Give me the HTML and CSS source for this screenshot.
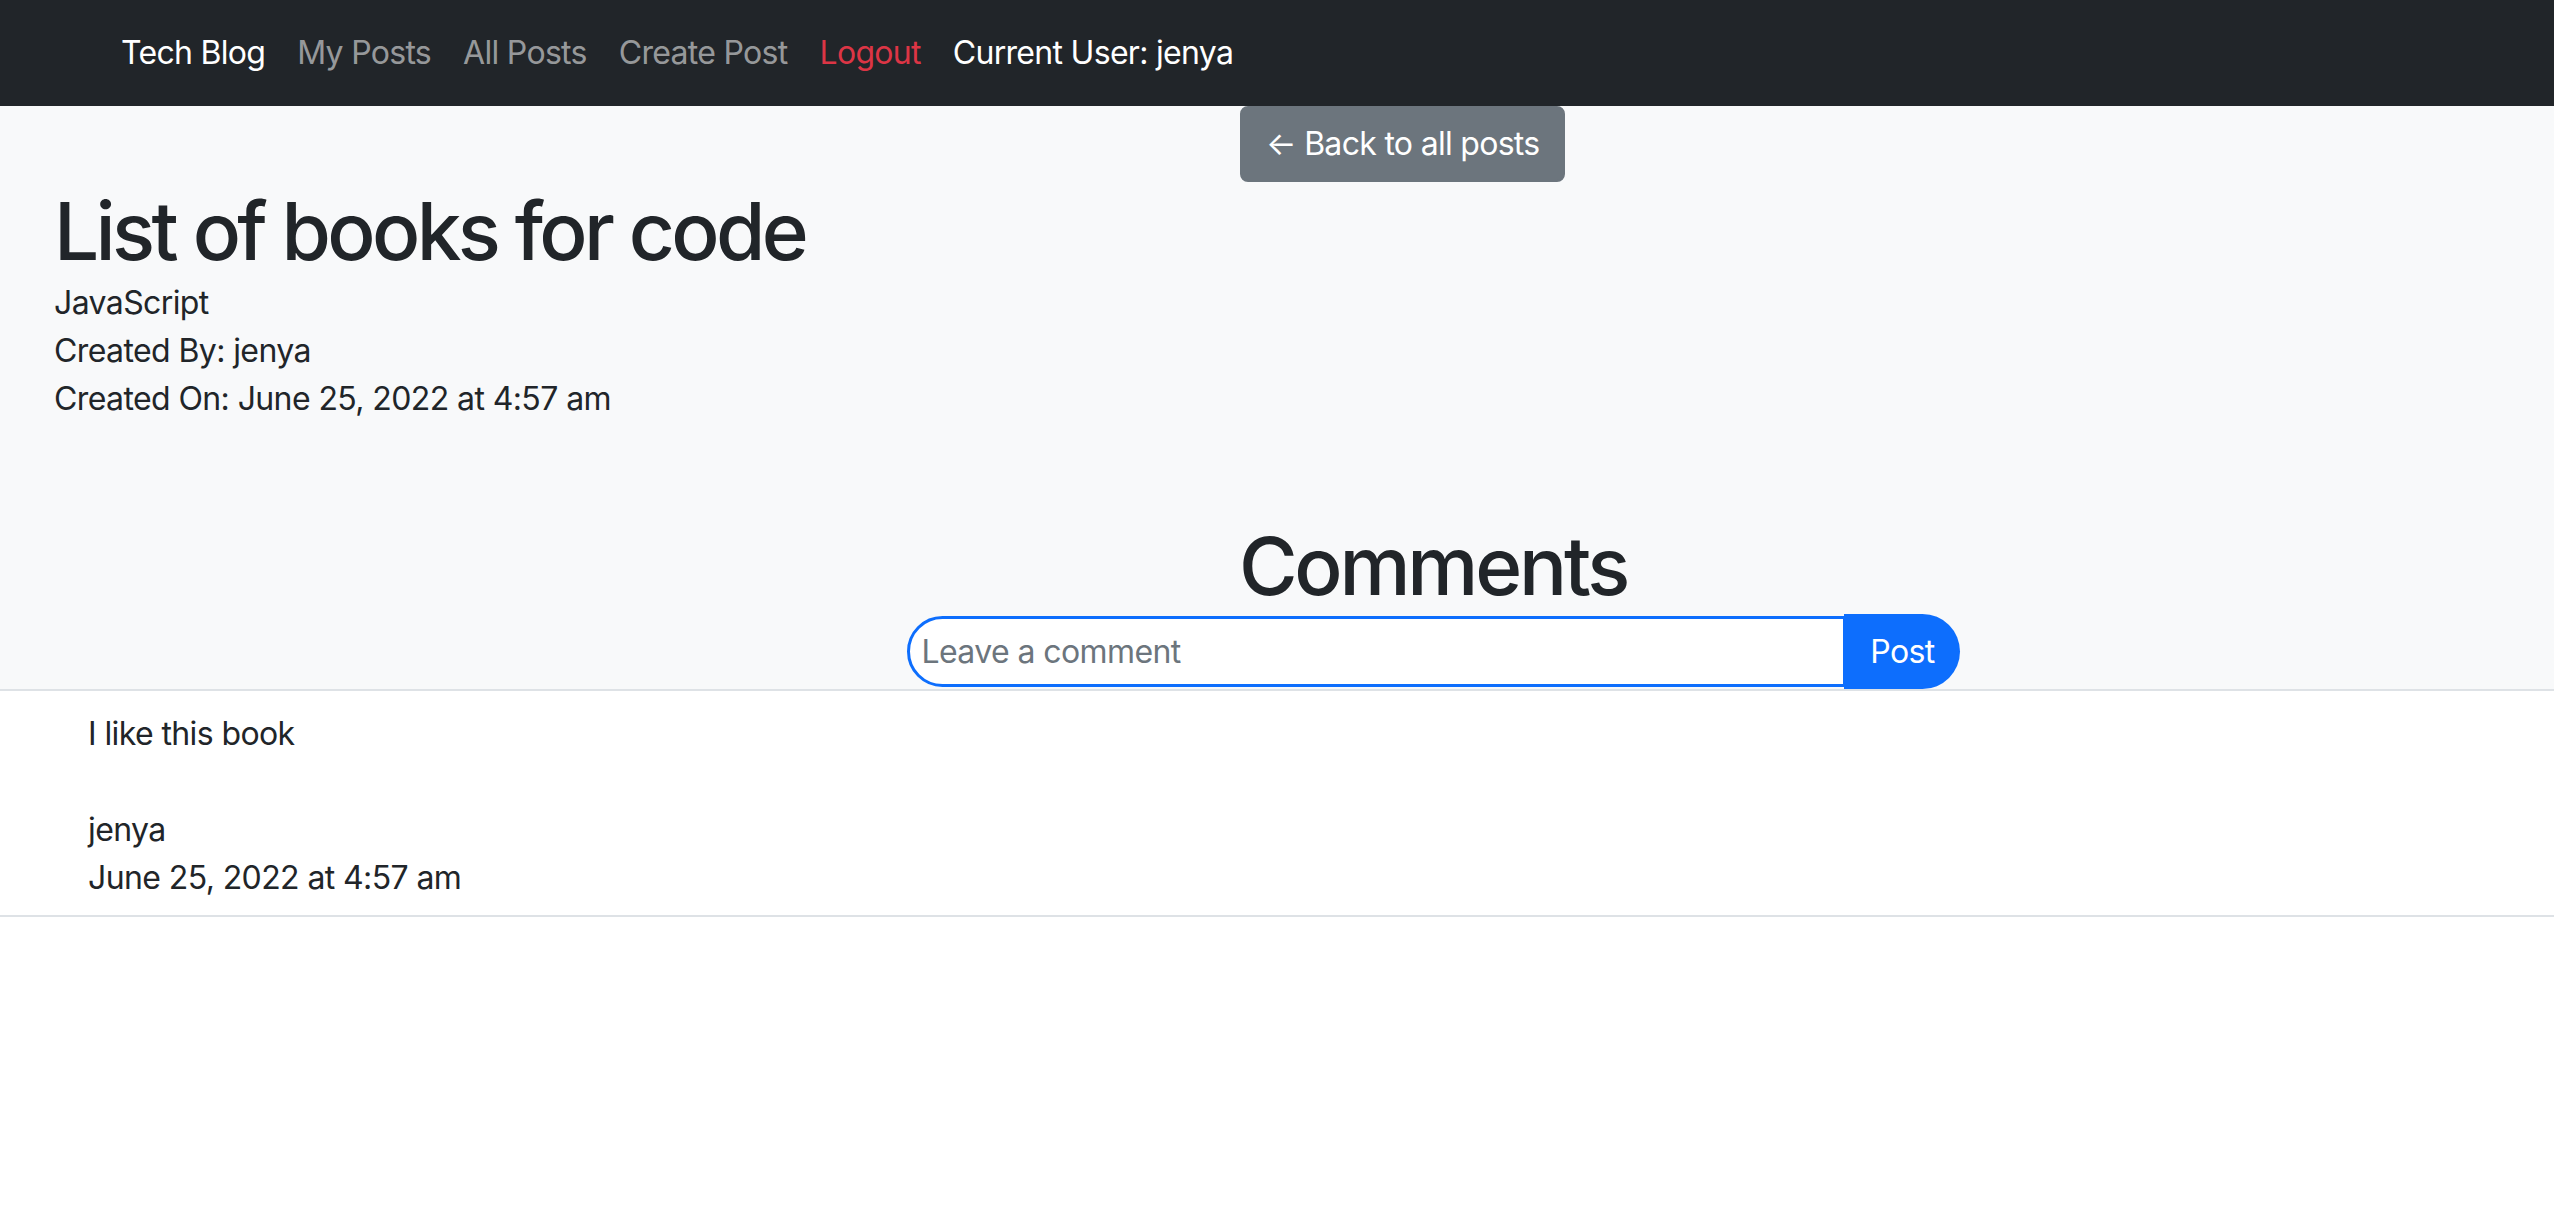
FILE: index.html
```html
<!DOCTYPE html>
<html lang="en">
<head>
<meta charset="utf-8">
<title>Tech Blog</title>
<link rel="stylesheet" href="styles.css">
</head>
<body>
<nav class="navbar">
  <a class="nav-brand" href="#">Tech Blog</a>
  <a class="nav-link" href="#">My Posts</a>
  <a class="nav-link" href="#">All Posts</a>
  <a class="nav-link" href="#">Create Post</a>
  <a class="nav-link nav-logout" href="#">Logout</a>
  <span class="nav-user">Current User: jenya</span>
</nav>
<main class="post-area">
  <div class="back-row">
    <a class="btn-back" href="#">← Back to all posts</a>
  </div>
  <section class="post">
    <h1 class="post-title">List of books for code</h1>
    <p class="post-meta">JavaScript</p>
    <p class="post-meta">Created By: jenya</p>
    <p class="post-meta">Created On: June 25, 2022 at 4:57 am</p>
  </section>
  <section class="comments">
    <h2 class="comments-title">Comments</h2>
    <form class="comment-form">
      <input class="comment-input" type="text" placeholder="Leave a comment">
      <button class="comment-submit" type="button">Post</button>
    </form>
  </section>
</main>
<ul class="comment-list">
  <li class="comment">
    <p class="comment-text">I like this book</p>
    <p class="comment-meta">jenya</p>
    <p class="comment-meta">June 25, 2022 at 4:57 am</p>
  </li>
</ul>
</body>
</html>
```
FILE: styles.css
```css
* { box-sizing: border-box; }
html, body { margin: 0; padding: 0; }
body {
  font-family: Inter, "Liberation Sans", sans-serif;
  font-size: 32px;
  line-height: 48px;
  letter-spacing: -0.6px;
  color: #212529;
  background: #fff;
}
a { text-decoration: none; }
p { margin: 0; }

.navbar {
  height: 106px;
  background: #212529;
  display: flex;
  align-items: center;
  gap: 32px;
  padding-left: 121px;
  letter-spacing: -0.7px;
}
.nav-brand { color: #fff; }
.nav-link { color: rgba(255, 255, 255, 0.55); }
.nav-logout { color: #dc3545; }
.nav-user { color: #fff; }

.post-area {
  background: #f8f9fa;
  border-bottom: 2px solid #dee2e6;
}
.back-row { padding-left: 1240px; }
.btn-back {
  display: inline-block;
  background: #6c757d;
  color: #fff;
  border: 2px solid #6c757d;
  border-radius: 8px;
  padding: 12px 23px 12px 24px;
  line-height: 48px;
  letter-spacing: -0.7px;
}

.post { padding-left: 54px; }
.post-title {
  margin: 1px 0 0 0;
  font-size: 80px;
  line-height: 96px;
  font-weight: 500;
  letter-spacing: -0.046em;
}

.comments {
  padding-left: 312px;
  display: flex;
  flex-direction: column;
  align-items: center;
  padding-top: 95px;
}
.comments-title {
  margin: 0;
  font-size: 80px;
  line-height: 96px;
  font-weight: 500;
  letter-spacing: -0.04em;
}
.comment-form {
  display: flex;
  align-items: center;
  width: 1053px;
}
.comment-input {
  flex: 1;
  height: 71px;
  border: 3px solid #0d6efd;
  border-radius: 36px 0 0 36px;
  padding: 0 12px;
  font-family: inherit;
  font-size: 32px;
  letter-spacing: -0.6px;
  color: #212529;
  background: #fff;
  outline: none;
}
.comment-input::placeholder { color: #6c757d; }
.comment-submit {
  width: 116px;
  height: 75px;
  margin-left: -2px;
  border: 0;
  border-radius: 0 38px 38px 0;
  background: #0d6efd;
  color: #fff;
  font-family: inherit;
  font-size: 32px;
  letter-spacing: -0.6px;
  padding: 0 0 0 2px;
}

.comment-list {
  list-style: none;
  margin: 0;
  padding: 0;
}
.comment {
  padding: 19px 88px 13px;
  border-bottom: 2px solid #dee2e6;
}
.comment-text { margin-bottom: 48px; }
```
